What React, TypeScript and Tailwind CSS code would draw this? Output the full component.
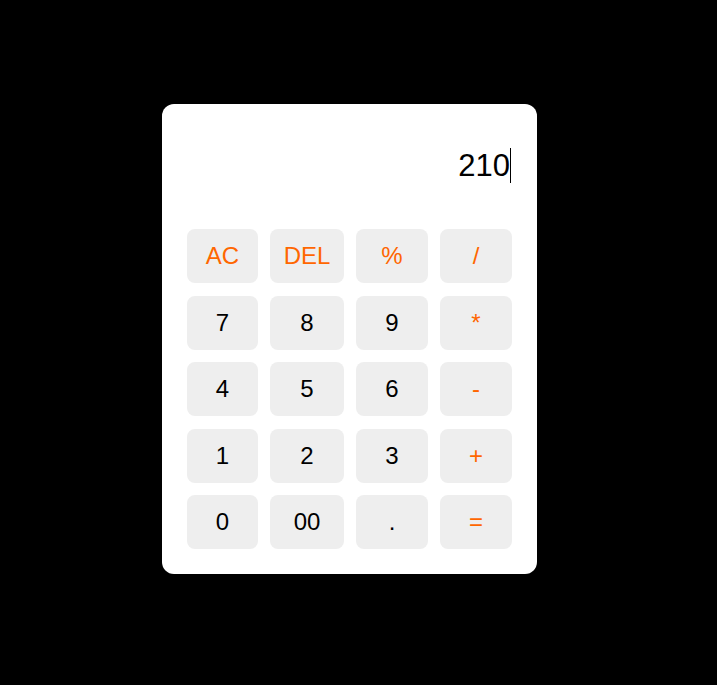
import { useState } from 'react';

const keys = [
    { label: 'AC', op: true },
    { label: 'DEL', op: true },
    { label: '%', op: true },
    { label: '/', op: true },
    { label: '7' },
    { label: '8' },
    { label: '9' },
    { label: '*', op: true },
    { label: '4' },
    { label: '5' },
    { label: '6' },
    { label: '-', op: true },
    { label: '1' },
    { label: '2' },
    { label: '3' },
    { label: '+', op: true },
    { label: '0' },
    { label: '00' },
    { label: '.' },
    { label: '=', op: true },
];

const App = () => {
    const [value] = useState('210');

    return (
        <div className="min-h-screen bg-black pt-[104px] pl-[162px] font-['Liberation_Sans',Arial,sans-serif]">
            <div className="w-[375px] rounded-xl bg-white p-[25px]">
                {/* display */}
                <div className="h-[100px] flex justify-end items-start pt-[19px] pr-[1px]">
                    <span className="text-[31px] leading-[35px] text-black">{value}</span>
                    <span className="w-px h-[35px] bg-black" />
                </div>

                <div className="grid grid-cols-[71px_74px_72px_72px] gap-x-3 gap-y-[12.5px]">
                    {keys.map((k) => (
                        <button
                            key={k.label}
                            className={`h-[54px] rounded-lg bg-[#eeeeee] text-[24px] leading-none flex items-center justify-center ${k.op ? 'text-[#ff6600]' : 'text-black'}`}
                        >
                            {k.label}
                        </button>
                    ))}
                </div>
            </div>
        </div>
    );
};

export default App;
